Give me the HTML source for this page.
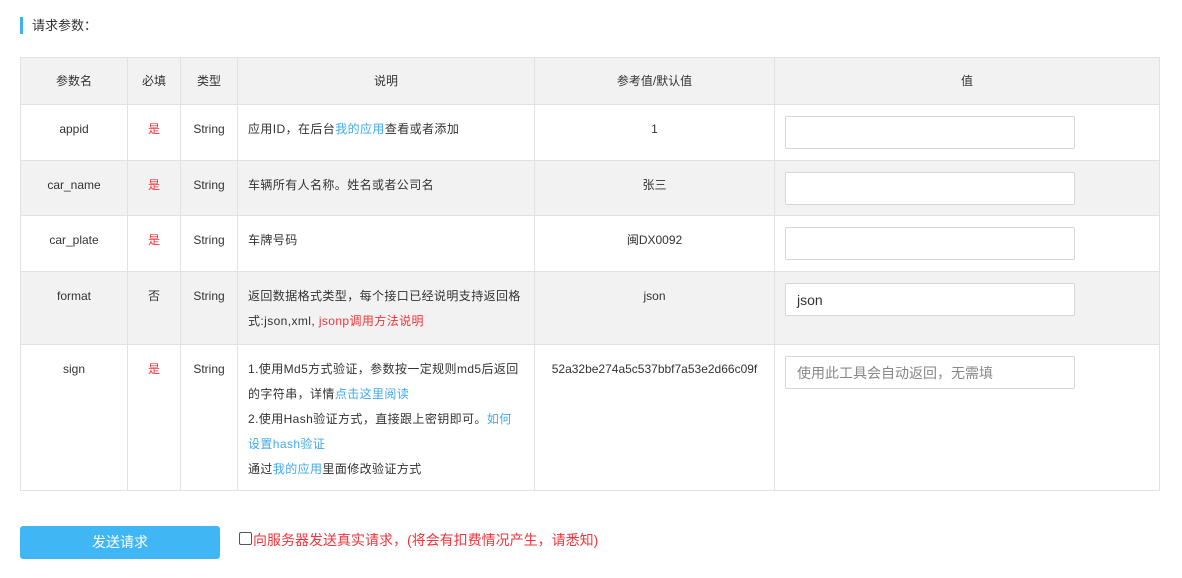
<!DOCTYPE html>
<html><head><meta charset="utf-8"><style>
body{margin:0;background:#fff;font-family:"Liberation Sans","Noto Sans CJK SC",sans-serif;font-size:12px;color:#333;width:1182px;height:578px;overflow:hidden;position:relative}
.title{position:absolute;left:20px;top:17px;height:17px;border-left:3px solid #3fb2f0;padding-left:9px;font-size:13px;line-height:17px;color:#333}
table{position:absolute;left:20px;top:57px;border-collapse:collapse;width:1139px;table-layout:fixed}
td,th{border:1px solid #e2e2e2;vertical-align:top;padding:12px 10px 10px;line-height:25px;font-weight:normal}
th{background:#f2f2f2;text-align:center;vertical-align:middle;padding:0;height:46px}
tr.g td{background:#f2f2f2}
.c{text-align:center}
.d{letter-spacing:0.4px}
.r{color:#f0343b}
.b{color:#3fa9f0}
.inp{height:33px;border:1px solid #d6d6d6;border-radius:2px;background:#fff;font-size:14px;line-height:33px;padding-left:11px;box-sizing:border-box;width:290px;margin-top:-1px}
.btn{position:absolute;left:20px;top:526px;width:200px;height:33px;background:#41b6f5;border-radius:3px;color:#fff;text-align:center;line-height:33px;font-size:14px}
.chk{position:absolute;left:239px;top:532px;font-size:14px;color:#f0343b;line-height:16px}
.chk span{display:inline-block;width:11px;height:11px;border:1px solid #555;border-radius:2px;vertical-align:0px;margin-right:1px}
</style></head><body>
<div class="title">请求参数：</div>
<table>
<colgroup><col style="width:107px"><col style="width:53px"><col style="width:57px"><col style="width:297px"><col style="width:240px"><col style="width:385px"></colgroup>
<tr><th>参数名</th><th>必填</th><th>类型</th><th>说明</th><th>参考值/默认值</th><th>值</th></tr>
<tr style="height:56px"><td class="c">appid</td><td class="c r">是</td><td class="c">String</td><td class="d">应用ID，在后台<span class="b">我的应用</span>查看或者添加</td><td class="c">1</td><td><div class="inp"></div></td></tr>
<tr class="g" style="height:55px"><td class="c">car_name</td><td class="c r">是</td><td class="c">String</td><td class="d">车辆所有人名称。姓名或者公司名</td><td class="c">张三</td><td><div class="inp"></div></td></tr>
<tr style="height:56px"><td class="c">car_plate</td><td class="c r">是</td><td class="c">String</td><td class="d">车牌号码</td><td class="c">闽DX0092</td><td><div class="inp"></div></td></tr>
<tr class="g" style="height:71px"><td class="c">format</td><td class="c">否</td><td class="c">String</td><td class="d">返回数据格式类型，每个接口已经说明支持返回格式:json,xml, <span class="r">jsonp调用方法说明</span></td><td class="c">json</td><td><div class="inp" style="color:#333">json</div></td></tr>
<tr style="height:146px"><td class="c">sign</td><td class="c r">是</td><td class="c">String</td><td class="d" style="padding-bottom:8px">1.使用Md5方式验证，参数按一定规则md5后返回的字符串，详情<span class="b">点击这里阅读</span><br>2.使用Hash验证方式，直接跟上密钥即可。<span class="b">如何设置hash验证</span><br>通过<span class="b">我的应用</span>里面修改验证方式</td><td class="c" style="padding:12px 4px;white-space:nowrap">52a32be274a5c537bbf7a53e2d66c09f</td><td><div class="inp" style="color:#888">使用此工具会自动返回，无需填</div></td></tr>
</table>
<div class="btn">发送请求</div>
<div class="chk"><span></span>向服务器发送真实请求，(将会有扣费情况产生，请悉知)</div>
</body></html>
